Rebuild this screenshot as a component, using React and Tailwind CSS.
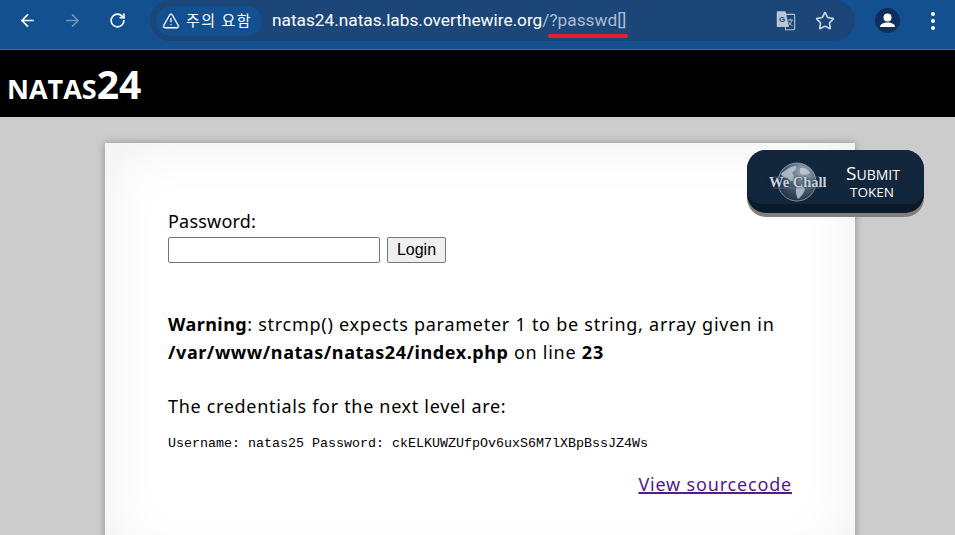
import { ArrowLeft, ArrowRight, RotateCw, Star, TriangleAlert } from 'lucide-react'

const BODY_FONT = "font-['Noto_Sans','Noto_Sans_CJK_KR',sans-serif]"

function BrowserBar() {
  return (
    <div className="h-[50px] bg-[#12508f] border-b border-[#3f74ad] flex items-start text-white">
      <div className="w-[150px] h-[41px] flex items-center pl-[18px] shrink-0">
        <ArrowLeft size={19} strokeWidth={2.2} />
        <ArrowRight size={19} strokeWidth={2.2} className="ml-[26px] text-[#6f93bb]" />
        <RotateCw size={17} strokeWidth={2.4} className="ml-[27px]" />
      </div>
      <div className="w-[705px] h-[41px] rounded-[21px] bg-[#1b4677] flex items-center pl-[6px] shrink-0">
        <div className="h-[30px] w-[106px] rounded-full bg-[#12508f] flex items-center pl-[6px] text-[15px] font-['Noto_Sans_CJK_KR',sans-serif]">
          <TriangleAlert size={18} strokeWidth={1.8} />
          <span className="ml-[6px] tracking-[1.5px] whitespace-nowrap">주의 요함</span>
        </div>
        <div className="ml-[10px] mt-[1px] text-[17.25px] font-['Roboto',sans-serif] whitespace-nowrap relative">
          natas24.natas.labs.overthewire.org<span className="text-[#a9bed6]">/?passwd[]</span>
          <div className="absolute left-[276px] top-[26px] h-[4px] w-[80px] rounded-full bg-[#e3202c]" />
        </div>
        <div className="ml-auto mr-[20px] flex items-center gap-[19px]">
          <svg width="21" height="21" viewBox="0 0 24 24">
            <path d="M11 5h10.500a1 1 0 0 1 1 1v15.500a1 1 0 0 1-1 1H12z" fill="#1b4677" stroke="#b9c6d6" strokeWidth="1.200" />
            <path d="M2 2.500a1 1 0 0 1 1-1h9l4 18H3a1 1 0 0 1-1-1z" fill="#b9c6d6" />
            <text x="4.500" y="13.500" fontSize="9" fontWeight="700" fill="#1b4677" fontFamily="Liberation Sans, sans-serif">G</text>
            <path d="M14.500 11.500h6M17.500 10v1.500M19.500 11.500c-.8 3-2.500 5-5 6.500M15.500 13.500c.8 1.800 2.500 3.500 4.500 4.500" fill="none" stroke="#b9c6d6" strokeWidth="1.100" />
          </svg>
          <Star size={20} strokeWidth={2} className="text-[#c8d3e0]" />
        </div>
      </div>
      <div className="flex-1 h-[41px] flex items-center pl-[20px]">
        <svg width="25" height="25" viewBox="0 0 25 25">
          <circle cx="12.500" cy="12.500" r="12.500" fill="#0e2f5c" />
          <circle cx="12.500" cy="9.500" r="4" fill="#fff" />
          <path d="M5 19c0-3 3.500-4.500 7.500-4.500S20 16 20 19z" fill="#fff" />
        </svg>
        <div className="ml-[31px] flex flex-col gap-[3px]">
          <span className="w-[4px] h-[4px] rounded-full bg-white" />
          <span className="w-[4px] h-[4px] rounded-full bg-white" />
          <span className="w-[4px] h-[4px] rounded-full bg-white" />
        </div>
      </div>
    </div>
  )
}

function Globe() {
  return (
    <svg width="48" height="40" viewBox="0 0 48 40" className="absolute left-[26px] top-[12px]">
      <defs>
        <radialGradient id="globe" cx="65%" cy="25%" r="80%">
          <stop offset="0%" stopColor="#9fadbb" />
          <stop offset="55%" stopColor="#4b5f74" />
          <stop offset="100%" stopColor="#1c3046" />
        </radialGradient>
      </defs>
      <circle cx="24" cy="20" r="19" fill="url(#globe)" stroke="#a9b5c1" strokeWidth="0.700" />
      <path d="M8 12c5-4 9-8 15-8 1 3-2 5-4 7 2 2 3 5 1 8-3 1-4-2-6-3-2 0-5-1-6-4zM24 24c4-1 7 0 8 3-1 4-4 8-7 10-2-4-3-9-1-13zM27 6c4-1 8 1 10 5-3 2-7 2-10 0z" fill="#c3ccd5" opacity="0.8" />
      <path d="M0 15h48M0 26h48" stroke="#8ea0b2" strokeWidth="0.800" opacity="0.5" />
    </svg>
  )
}

function WeChallButton() {
  return (
    <div className="absolute left-[747px] top-[150px] w-[177px] h-[67px] rounded-[19px] bg-[#7f7f7f]">
      <div className="relative h-[63px] rounded-[19px] bg-[#0b1a29] overflow-hidden">
        <div className="h-[54px] rounded-t-[19px] rounded-b-[14px] bg-[#12263c] relative">
          <Globe />
          <span className="absolute left-[22px] top-[24px] text-[14.5px] leading-[16px] font-bold text-[#c9d1d9] font-['Liberation_Serif',serif] whitespace-nowrap [text-shadow:0_0_3px_#12263c]">We Chall</span>
          <div className="absolute left-[99px] top-[14px] w-[52px] text-center text-white font-['Open_Sans',sans-serif] leading-[19px]">
            <div className="text-[14px] whitespace-nowrap"><span className="text-[19px]">S</span>UBMIT</div>
            <div className="text-[13.5px] -mt-[1px]">TOKEN</div>
          </div>
        </div>
      </div>
    </div>
  )
}

export default function App() {
  return (
    <div className={`relative w-[955px] h-[535px] overflow-hidden bg-[#cccccc] ${BODY_FONT}`}>
      <BrowserBar />
      <div className="h-[67px] bg-black text-white font-['Open_Sans',sans-serif] font-bold pl-[7px] text-[39px] leading-[40px] pt-[14px] whitespace-nowrap">
        <span className="[font-variant:small-caps]">natas</span>24
      </div>
      <div className="mx-[105px] mt-[26px] w-[750px] h-[420px] bg-white shadow-[0_0_8px_rgba(0,0,0,0.3),inset_0_0_60px_rgba(0,0,0,0.07)] pl-[63px] pr-[63px] pt-[66px] text-[18px] text-black">
        <div className="leading-[24px] tracking-[0.2px]">Password:</div>
        <div className="flex items-center mt-[4px]">
          <input className="w-[212px] h-[26px] bg-white border border-[#767676] rounded-[2px]" />
          <button className="ml-[7px] w-[59px] h-[26px] bg-[#efefef] border border-[#767676] rounded-[2px] text-[16px] leading-[20px] font-['Liberation_Sans',sans-serif]">Login</button>
        </div>
        <div className="mt-[47px] leading-[28px] whitespace-nowrap tracking-[0.74px]">
          <div><b className="tracking-[0.45px]">Warning</b>: strcmp() expects parameter 1 to be string, array given in</div>
          <div><b className="tracking-[0.57px]">/var/www/natas/natas24/index.php</b> on line <b className="tracking-[1px]">23</b></div>
        </div>
        <div className="mt-[26px] leading-[28px] tracking-[0.68px]">The credentials for the next level are:</div>
        <div className="mt-[14px] text-[13.33px] leading-[20px] font-['Liberation_Mono',monospace] whitespace-nowrap">Username: natas25 Password: ckELKUWZUfpOv6uxS6M7lXBpBssJZ4Ws</div>
        <div className="mt-[17px] text-right leading-[26px] tracking-[0.82px]">
          <a href="#" className="text-[#551a8b] underline decoration-2">View sourcecode</a>
        </div>
      </div>
      <WeChallButton />
    </div>
  )
}
